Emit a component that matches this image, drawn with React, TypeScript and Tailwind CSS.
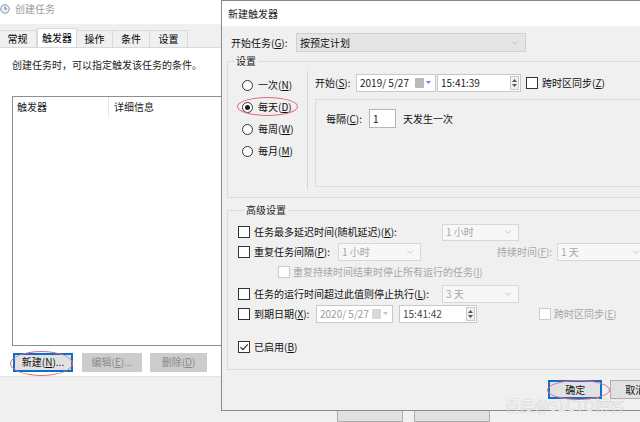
import { ChevronDown } from "lucide-react";

function Mn({ k }: { k: string }) {
  return (
    <span>
      (<span className="underline underline-offset-1">{k}</span>)
    </span>
  );
}

function Check({ checked = false, disabled = false }: { checked?: boolean; disabled?: boolean }) {
  return (
    <span
      className={`flex h-[12px] w-[12px] shrink-0 items-center justify-center border bg-white ${
        disabled ? "border-[#cccccc]" : "border-[#333333]"
      }`}
    >
      {checked && (
        <svg width="10" height="10" viewBox="0 0 10 10">
          <path d="M1.5 5.2 L4 7.7 L8.7 2.3" fill="none" stroke="#222" strokeWidth="1.1" />
        </svg>
      )}
    </span>
  );
}

function Radio({ checked = false }: { checked?: boolean }) {
  return (
    <span className="flex h-[11px] w-[11px] shrink-0 items-center justify-center rounded-full border border-[#333333] bg-white">
      {checked && <span className="h-[5px] w-[5px] rounded-full bg-[#1a1a1a]" />}
    </span>
  );
}

function Combo({ text, className, disabled = true }: { text: string; className: string; disabled?: boolean }) {
  return (
    <div
      className={`flex items-center justify-between border pl-[3px] pr-[5px] ${
        disabled ? "border-[#d7d7d7] bg-[#f7f7f7] text-[#a6a6a6]" : "border-[#d0d0d0] bg-[#e5e5e5] text-[#111]"
      } ${className}`}
    >
      <span>{text}</span>
      <ChevronDown size={10} strokeWidth={1.2} className="text-[#9a9a9a]" />
    </div>
  );
}

function DateBox({ text, className, disabled = false }: { text: string; className: string; disabled?: boolean }) {
  return (
    <div className={`flex items-center justify-between border border-[#c8c8c8] bg-white pl-[3px] pr-[4px] ${className}`}>
      <span className={disabled ? "text-[#9a9a9a]" : "text-[#222]"}>{text}</span>
      <span className="flex items-center gap-[2px]">
        <span className={`h-[10px] w-[9px] rounded-[1px] ${disabled ? "bg-[#d8d8d8]" : "bg-[#b9b9b9]"}`} />
        <svg width="5" height="4" viewBox="0 0 5 4">
          <path d="M0 0 H5 L2.5 3 Z" fill={disabled ? "#c4c4c4" : "#6b8cc7"} />
        </svg>
      </span>
    </div>
  );
}

function TimeBox({ text, className, disabled = false }: { text: string; className: string; disabled?: boolean }) {
  return (
    <div className={`flex items-center justify-between border border-[#c8c8c8] bg-white pl-[3px] ${className}`}>
      <span className={disabled ? "text-[#444]" : "text-[#222]"}>{text}</span>
      <span className="mr-[1px] flex h-[14px] w-[9px] flex-col items-center justify-center gap-[2px] border border-[#c8c8c8] bg-[#f0f0f0]">
        <svg width="5" height="3" viewBox="0 0 5 3">
          <path d="M0 3 H5 L2.5 0 Z" fill="#555" />
        </svg>
        <svg width="5" height="3" viewBox="0 0 5 3">
          <path d="M0 0 H5 L2.5 3 Z" fill="#555" />
        </svg>
      </span>
    </div>
  );
}

function ClockIcon() {
  return (
    <svg width="10" height="10" viewBox="0 0 10 10">
      <circle cx="5" cy="5" r="4.3" fill="#e9eef5" stroke="#8a9bb4" strokeWidth="1" />
      <path d="M5 2.6 V5 H7" fill="none" stroke="#5c6f8c" strokeWidth="0.9" />
    </svg>
  );
}

function Tab({ label, active = false, className = "" }: { label: string; active?: boolean; className?: string }) {
  return (
    <div
      className={`flex items-center justify-center border border-b-0 border-[#d9d9d9] ${
        active ? "relative z-10 h-[19px] bg-white" : "h-[17px] bg-[#f0f0f0]"
      } ${className}`}
    >
      {label}
    </div>
  );
}

function BackWindow() {
  return (
    <div className="flex h-full w-full flex-col">
      <div className="flex h-[25px] items-center gap-[5px] bg-white pb-[6px] text-[#9c9c9c]">
        <ClockIcon />
        <span>创建任务</span>
      </div>
      <div className="flex h-[23px] items-end bg-[#f0f0f0]">
        <Tab label="常规" className="ml-[-2px] w-[39px]" />
        <Tab label="触发器" active className="w-[40px]" />
        <Tab label="操作" className="w-[36px] border-l-0" />
        <Tab label="条件" className="w-[37px] border-l-0" />
        <Tab label="设置" className="w-[38px] border-l-0" />
      </div>
      <div className="flex h-[339px] flex-col border-t border-[#d9d9d9] bg-white pl-[12px]">
        <div className="mt-[10px] leading-[14px] text-[#222]">创建任务时，可以指定触发该任务的条件。</div>
        <div className="mt-[24px] h-[250px] w-[400px] border border-[#8e8e8e]">
          <div className="flex h-[20px] items-center text-[#222]">
            <span className="w-[95px] pl-[4px]">触发器</span>
            <span className="h-full border-l border-[#e5e5e5] pl-[5px] leading-[20px]">详细信息</span>
          </div>
        </div>
        <div className="mt-[7px] flex h-[19px] items-stretch">
          <div className="ml-[1px] flex w-[60px] items-center justify-center border-2 border-[#0a70d0] bg-[#e1e1e1] text-[#111]">
            新建<Mn k="N" />...
          </div>
          <div className="ml-[9px] flex w-[60px] items-center justify-center border border-[#cccccc] bg-[#cccccc] text-[#8a8a8a]">
            编辑<Mn k="E" />...
          </div>
          <div className="ml-[8px] flex w-[57px] items-center justify-center border border-[#cccccc] bg-[#cccccc] text-[#8a8a8a]">
            删除<Mn k="D" />
          </div>
        </div>
      </div>
      <div className="flex flex-1 items-start gap-[11px] border-t border-[#e4e4e4] bg-[#f0f0f0] pl-[337px] pt-[25px]">
        <div className="h-[20px] w-[66px] border border-[#adadad] bg-[#e1e1e1]" />
        <div className="h-[20px] w-[76px] border border-[#adadad] bg-[#e1e1e1]" />
      </div>
    </div>
  );
}

function Dialog() {
  return (
    <div className="absolute left-[221px] top-0 flex h-[411px] w-[440px] flex-col border border-[#8a8a8a] bg-[#f0f0f0] text-[#111]">
      <div className="flex h-[25px] shrink-0 items-center bg-white pl-[6px] text-[#222]">新建触发器</div>
      <div className="flex flex-col">
        <div className="mt-[7px] flex h-[19px] items-center pl-[9px]">
          <span className="w-[65px]">
            开始任务<Mn k="G" />:
          </span>
          <Combo text="按预定计划" disabled={false} className="h-[19px] w-[230px]" />
        </div>

        <fieldset className="ml-[5px] mt-[3px] w-[430px] border border-[#dcdcdc]">
          <legend className="ml-[6px] px-[2px] leading-[12px] text-[#222]">设置</legend>
          <div className="flex">
            <div className="flex w-[79px] flex-col pl-[14px] pt-[7px]">
              {[
                ["一次", "N", false],
                ["每天", "D", true],
                ["每周", "W", false],
                ["每月", "M", false],
              ].map(([l, k, c]) => (
                <div key={k as string} className="flex h-[22px] items-center gap-[5px]">
                  <Radio checked={c as boolean} />
                  <span>
                    {l as string}
                    <Mn k={k as string} />
                  </span>
                </div>
              ))}
            </div>
            <div className="mb-[8px] mt-[4px] border-l border-[#d4d4d4]" />
            <div className="flex flex-1 flex-col pb-[10px] pl-[7px]">
              <div className="mt-[7px] flex h-[18px] items-stretch">
                <span className="flex w-[41px] items-center">
                  开始<Mn k="S" />:
                </span>
                <DateBox text="2019/  5/27" className="w-[80px]" />
                <TimeBox text="15:41:39" className="ml-[1px] w-[84px]" />
                <span className="ml-[5px] flex items-center gap-[4px]">
                  <Check />
                  <span>
                    跨时区同步<Mn k="Z" />
                  </span>
                </span>
              </div>
              <div className="mt-[7px] h-[88px] border border-[#dcdcdc] pl-[10px] pt-[9px]">
                <div className="flex h-[19px] items-center">
                  <span className="w-[43px]">
                    每隔<Mn k="C" />:
                  </span>
                  <div className="flex h-[19px] w-[27px] items-center border border-[#b5b5b5] bg-white pl-[3px]">1</div>
                  <span className="ml-[7px]">天发生一次</span>
                </div>
              </div>
            </div>
          </div>
        </fieldset>

        <fieldset className="ml-[5px] mt-[6px] w-[430px] border border-[#dcdcdc] pb-[12px] pl-[10px] pt-[6px]">
          <legend className="ml-[6px] px-[2px] leading-[12px] text-[#222]">高级设置</legend>
          <div className="flex h-[20px] items-center">
            <span className="flex w-[204px] items-center gap-[4px]">
              <Check />
              <span>
                任务最多延迟时间(随机延迟)<Mn k="K" />:
              </span>
            </span>
            <Combo text="1 小时" className="h-[17px] w-[77px]" />
          </div>
          <div className="flex h-[20px] items-center">
            <span className="flex w-[100px] items-center gap-[4px]">
              <Check />
              <span>
                重复任务间隔<Mn k="P" />:
              </span>
            </span>
            <Combo text="1 小时" className="h-[18px] w-[83px]" />
            <span className="ml-[76px] w-[60px] text-[#a6a6a6]">
              持续时间<Mn k="F" />:
            </span>
            <Combo text="1 天" className="h-[18px] w-[90px]" />
          </div>
          <div className="flex h-[19px] items-center gap-[3px] pl-[40px] text-[#a6a6a6]">
            <Check disabled />
            <span>
              重复持续时间结束时停止所有运行的任务<Mn k="I" />
            </span>
          </div>
          <div className="mt-[3px] flex h-[20px] items-center">
            <span className="flex w-[204px] items-center gap-[4px]">
              <Check />
              <span>
                任务的运行时间超过此值则停止执行<Mn k="L" />:
              </span>
            </span>
            <Combo text="3 天" className="h-[18px] w-[77px]" />
          </div>
          <div className="flex h-[20px] items-center">
            <span className="flex w-[78px] items-center gap-[4px]">
              <Check />
              <span>
                到期日期<Mn k="X" />:
              </span>
            </span>
            <DateBox text="2020/  5/27" disabled className="h-[18px] w-[77px]" />
            <TimeBox text="15:41:42" disabled className="ml-[6px] h-[18px] w-[78px]" />
            <span className="ml-[62px] flex items-center gap-[3px] text-[#a6a6a6]">
              <Check disabled />
              <span>
                跨时区同步<Mn k="E" />
              </span>
            </span>
          </div>
          <div className="mt-[13px] flex h-[20px] items-center gap-[4px]">
            <Check checked />
            <span>
              已启用<Mn k="B" />
            </span>
          </div>
        </fieldset>

        <div className="mt-[10px] flex h-[19px] pl-[326px]">
          <div className="flex w-[63px] items-center justify-center border-2 border-[#0a70d0] bg-[#e1e1e1]">确定</div>
          <div className="ml-[8px] flex w-[58px] items-center justify-center border border-[#adadad] bg-[#e1e1e1]">取消</div>
        </div>
      </div>
    </div>
  );
}

export default function App() {
  return (
    <div className="relative h-[422px] w-[640px] overflow-hidden bg-[#f0f0f0] font-['Noto_Sans_CJK_SC',sans-serif] text-[10px] leading-[12px]">
      <BackWindow />
      <Dialog />

      {/* red annotation ellipses */}
      <div className="absolute left-[10px] top-[351px] h-[25px] w-[63px] rounded-[50%] border border-[#e56b7d]" />
      <div className="absolute left-[237px] top-[97px] h-[19px] w-[61px] rounded-[50%] border border-[#e56b7d]" />
      <div className="absolute left-[547px] top-[380px] h-[20px] w-[63px] rounded-[50%] border border-[#e56b7d]" />

      {/* watermark */}
      <div className="absolute left-[505px] top-[397px] text-[15px] leading-[16px] text-white/85 [text-shadow:0_0_1px_rgba(0,0,0,0.35)]">
        百度@51CTO博客
      </div>
    </div>
  );
}
